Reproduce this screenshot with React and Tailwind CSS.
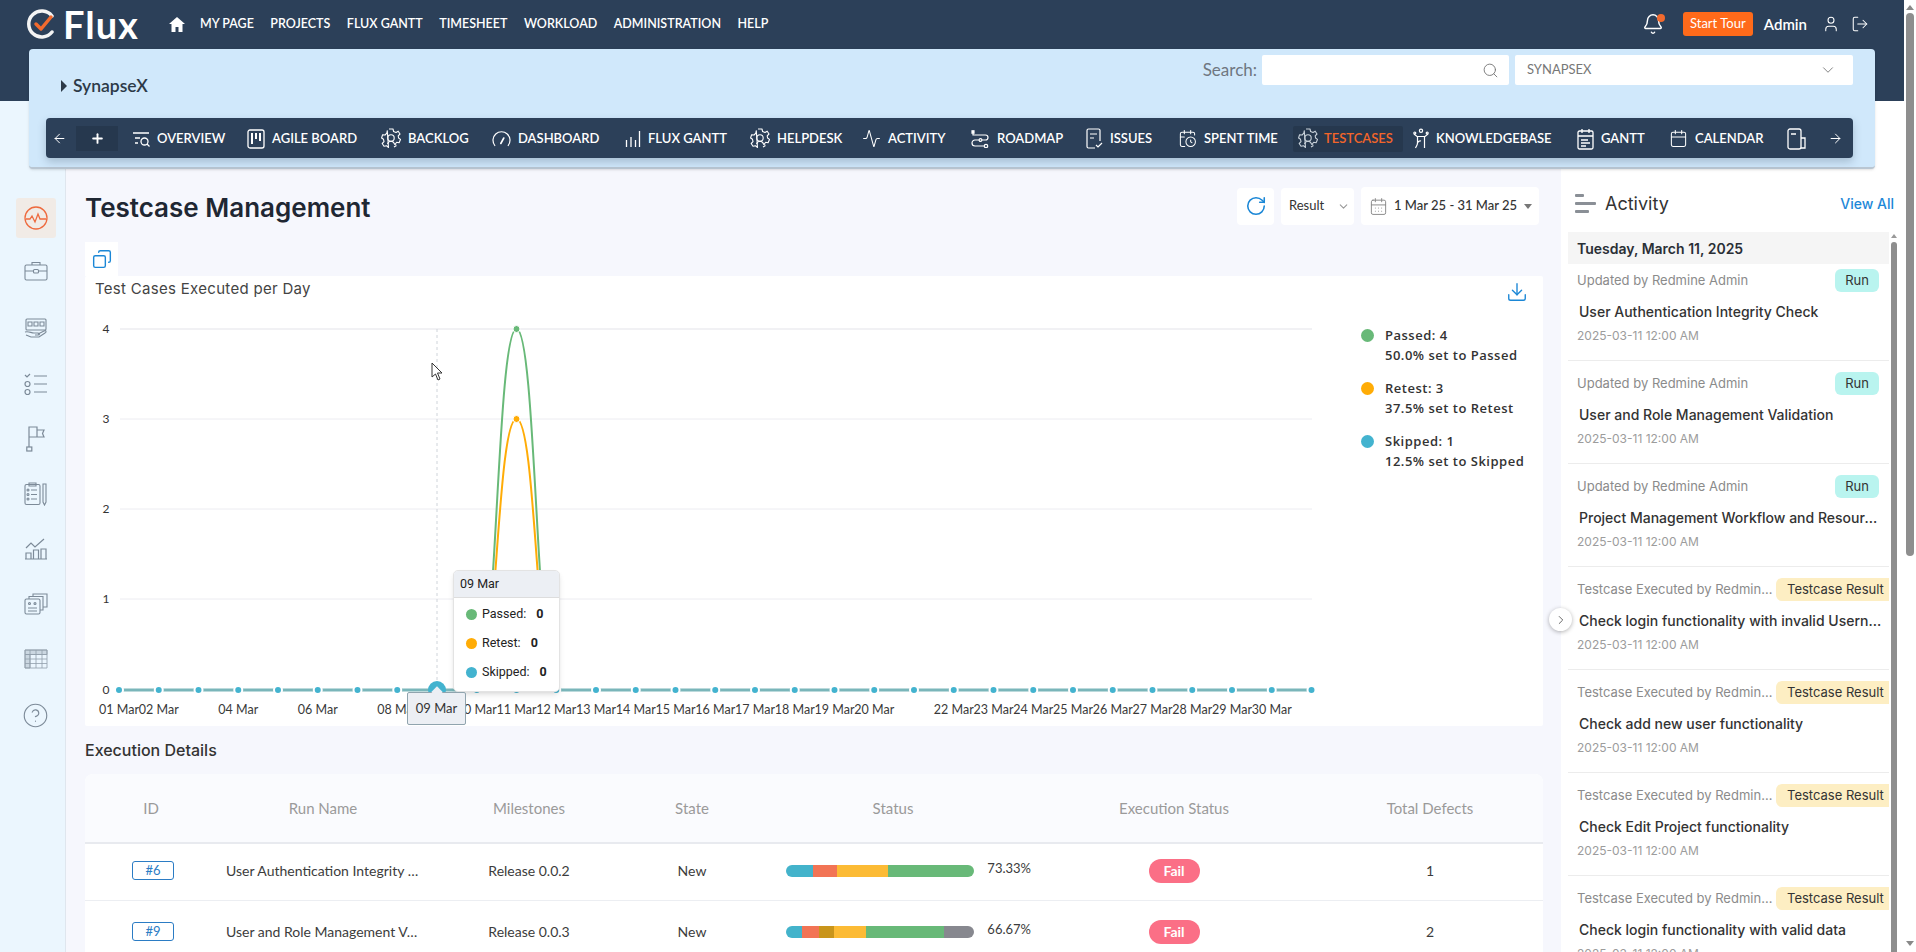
import React from 'react';
import {
  Bell, User, LogOut, Search, ChevronDown, RotateCw, Copy, Download, ArrowLeft, ArrowRight, Plus,
  ChevronRight, CircleHelp, Activity, CalendarClock, Calendar, CalendarDays,
} from 'lucide-react';

const topNav = ['MY PAGE', 'PROJECTS', 'FLUX GANTT', 'TIMESHEET', 'WORKLOAD', 'ADMINISTRATION', 'HELP'];

const OverviewIcon = () => (
  <svg width="18" height="18" viewBox="0 0 18 18" fill="none" stroke="currentColor" strokeWidth="1.3">
    <path d="M1 3h16M3 8h5M3 13h3" />
    <circle cx="12.5" cy="11.5" r="3.5" />
    <path d="M15 14l2.5 2.5" />
  </svg>
);

const AgileIcon = () => (
  <svg width="18" height="20" viewBox="0 0 18 20" fill="none" stroke="currentColor" strokeWidth="1.3">
    <rect x="1" y="1" width="16" height="18" rx="2" />
    <path d="M5 4v11M9 4v6M13 4v8" strokeWidth="2" />
  </svg>
);

// gear outline with a small figure in the middle, used for backlog, helpdesk and testcases
const GearIcon = () => (
  <svg width="20" height="22" viewBox="0 0 20 22" fill="none" stroke="currentColor" strokeWidth="1.1" strokeLinejoin="round">
    <path d="M8 1h4l.6 2.500 2.400 1 2.200-1.300 1.800 2.800-1.800 1.800.4 2.200 1.900 1.400-1.400 3.300-2.400-.4-1.500 1.700M7.500 19.500l-2-1.800-2.500.6-1.800-2.800 1.800-1.800-.5-2.400L.6 10l1-3.300 2.500.3 1.700-1.800L6.300 2.700z" />
    <circle cx="10" cy="10" r="3.200" />
    <path d="M6.500 16c.8-2 2-2.800 3.500-2.800s3 1 3.600 3l1.800 1.200M13 19l2.500-1.500" />
  </svg>
);

const DashIcon = () => (
  <svg width="19" height="19" viewBox="0 0 19 19" fill="none" stroke="currentColor" strokeWidth="1.2" strokeLinecap="round">
    <path d="M2.800 16.500A8.500 8.500 0 1 1 16.200 16.500" />
    <path d="M8.800 14.500l3-5.500" strokeWidth="1.600" />
  </svg>
);

const GanttIcon = () => (
  <svg width="16" height="18" viewBox="0 0 16 18" fill="none" stroke="currentColor" strokeWidth="1.3">
    <path d="M1.5 10v7M6 7v10M10.500 10v7M14.500 1v16" />
  </svg>
);

const ActivityIcon = () => <Activity size={19} strokeWidth={1.3} />;

const RoadmapIcon = () => (
  <svg width="19" height="18" viewBox="0 0 19 18" fill="none" stroke="currentColor" strokeWidth="1.200">
    <rect x="1" y="0.800" width="2" height="2.400" fill="currentColor" />
    <path d="M2 3.500V5h12.500a2.500 2.500 0 0 1 0 5H4a3 3 0 0 0 0 6h9" />
    <circle cx="9.500" cy="10" r="1.400" fill="#2c4059" />
    <circle cx="15" cy="16" r="1.700" />
  </svg>
);

const IssuesIcon = () => (
  <svg width="17" height="21" viewBox="0 0 17 21" fill="none" stroke="currentColor" strokeWidth="1.2">
    <path d="M9 20H2.500A1.500 1.500 0 0 1 1 18.500v-16A1.500 1.500 0 0 1 2.500 1h10A1.500 1.500 0 0 1 14 2.500V13" />
    <path d="M4 6h7M4 10h4M10 17l2 2 4-4" />
  </svg>
);

const BookIcon = () => (
  <svg width="16" height="22" viewBox="0 0 16 22" fill="none" stroke="currentColor" strokeWidth="1.2">
    <circle cx="8" cy="2.800" r="1.600" />
    <path d="M1 6l3 2.500h8L15 6" />
    <circle cx="1.800" cy="5" r="1" />
    <circle cx="14.200" cy="5" r="1" />
    <path d="M4.500 9v6c0 2-1 3-2 5M11.500 9v11M8 13a3 3 0 0 0-3.500 2" />
  </svg>
);

const GanttDocIcon = () => (
  <svg width="17" height="22" viewBox="0 0 17 22" fill="none" stroke="currentColor" strokeWidth="1.3">
    <rect x="1" y="3" width="15" height="18" rx="1.500" />
    <path d="M5 1v4M12 1v4M1 8h15M4 12h7M4 15h9M4 18h5" />
  </svg>
);

const NotesIcon = () => (
  <svg width="20" height="22" viewBox="0 0 20 22" fill="none" stroke="currentColor" strokeWidth="1.3">
    <rect x="1" y="1" width="13" height="20" rx="2" />
    <path d="M4 6h5M14 10h4v10h-4" />
  </svg>
);

const toolbar = [
  { label: 'OVERVIEW', icon: <OverviewIcon />, width: 'w-[115px]' },
  { label: 'AGILE BOARD', icon: <AgileIcon />, width: 'w-[134px]' },
  { label: 'BACKLOG', icon: <GearIcon />, width: 'w-[111px]' },
  { label: 'DASHBOARD', icon: <DashIcon />, width: 'w-[133px]' },
  { label: 'FLUX GANTT', icon: <GanttIcon />, width: 'w-[125px]' },
  { label: 'HELPDESK', icon: <GearIcon />, width: 'w-[112px]' },
  { label: 'ACTIVITY', icon: <ActivityIcon />, width: 'w-[109px]' },
  { label: 'ROADMAP', icon: <RoadmapIcon />, width: 'w-[115px]' },
  { label: 'ISSUES', icon: <IssuesIcon />, width: 'w-[92px]' },
  { label: 'SPENT TIME', icon: <CalendarClock size={19} strokeWidth={1.3} />, width: 'w-[120px]' },
  { label: 'TESTCASES', icon: <GearIcon />, width: 'w-[115px]', active: true },
  { label: 'KNOWLEDGEBASE', icon: <BookIcon />, width: 'w-[164px]' },
  { label: 'GANTT', icon: <GanttDocIcon />, width: 'w-[92px]' },
  { label: 'CALENDAR', icon: <Calendar size={19} strokeWidth={1.3} />, width: 'w-[118px]' },
];

const BriefcaseIcon = () => (
  <svg width="24" height="20" viewBox="0 0 24 20" fill="none" stroke="currentColor" strokeWidth="1.1">
    <rect x="1" y="4" width="22" height="15" rx="1.500" />
    <path d="M8 4V1.500h8V4M1 10h8M15 10h8" />
    <rect x="9.500" y="8.500" width="5" height="3.500" rx="1" />
  </svg>
);

const MonitorsIcon = () => (
  <svg width="24" height="24" viewBox="0 0 24 24" fill="none" stroke="currentColor" strokeWidth="1.1">
    <rect x="2" y="2" width="20" height="11" rx="1" />
    <path d="M4 5h4v4H4zM10 5h4v4h-4zM16 5h4v4h-4zM1 15c4-1 6 1 9 1h4c2 0 2 2 0 2h-3M14 17l6-3c2-1 3 1 1 2l-6 4H7l-5-2" />
  </svg>
);

const ChecklistIcon = () => (
  <svg width="24" height="24" viewBox="0 0 24 24" fill="none" stroke="currentColor" strokeWidth="1.2">
    <path d="M1 3l2 2 3-3M10 4h13M10 12h13M10 20h13" />
    <circle cx="3.500" cy="12" r="2.500" />
    <circle cx="3.500" cy="20" r="2.500" />
  </svg>
);

const FlagIcon = () => (
  <svg width="20" height="26" viewBox="0 0 20 26" fill="none" stroke="currentColor" strokeWidth="1.2">
    <path d="M3 21V1h8v10H3M11 4h7l-1.500 3.500L18 11h-7" />
    <rect x="0.800" y="21" width="5" height="4" />
  </svg>
);

const ClipboardPenIcon = () => (
  <svg width="24" height="24" viewBox="0 0 24 24" fill="none" stroke="currentColor" strokeWidth="1.1">
    <rect x="1" y="2.500" width="15" height="20" rx="1.500" />
    <path d="M5 1h7v3H5zM7 8h6M7 12.500h6M7 17h6" />
    <circle cx="4" cy="8" r="1" />
    <circle cx="4" cy="12.500" r="1" />
    <circle cx="4" cy="17" r="1" />
    <path d="M19 2h3v18l-1.500 3-1.500-3z" />
  </svg>
);

const ChartIcon = () => (
  <svg width="24" height="24" viewBox="0 0 24 24" fill="none" stroke="currentColor" strokeWidth="1.2">
    <path d="M1 22h22M2 22v-6h5v6M9.500 22v-9h5v9M17 22V12h5v10M2 11l5-5 4 4 9-8" />
  </svg>
);

const CardsIcon = () => (
  <svg width="24" height="24" viewBox="0 0 24 24" fill="none" stroke="currentColor" strokeWidth="1.1">
    <rect x="1" y="7" width="15" height="15" rx="1.500" />
    <path d="M5 7V4.500h14V18h-3M9 4.500V2h14v13h-4" />
    <path d="M4 16h9M4 19h9" />
    <circle cx="5.500" cy="11.500" r="1" />
    <circle cx="11" cy="11.500" r="1" />
  </svg>
);

const GridIcon = () => (
  <svg width="24" height="20" viewBox="0 0 24 20" fill="none" stroke="currentColor" strokeWidth="0.8" opacity="0.8">
    <path d="M1 1h22v18H1zM1 5.500h22M1 10h22M1 14.500h22M6 1v18M12 1v18M18 1v18" />
    <path d="M1 1h22v4.500H1zM1 5.500h5V19H1z" fill="currentColor" fillOpacity="0.35" />
  </svg>
);

const sideIcons = [
  <BriefcaseIcon />,
  <MonitorsIcon />,
  <ChecklistIcon />,
  <FlagIcon />,
  <ClipboardPenIcon />,
  <ChartIcon />,
  <CardsIcon />,
  <GridIcon />,
];

const activity = [
  { meta: 'Updated by Redmine Admin', tag: 'Run', title: 'User Authentication Integrity Check' },
  { meta: 'Updated by Redmine Admin', tag: 'Run', title: 'User and Role Management Validation' },
  { meta: 'Updated by Redmine Admin', tag: 'Run', title: 'Project Management Workflow and Resource Planning' },
  { meta: 'Testcase Executed by Redmine Admin', tag: 'Testcase Result', title: 'Check login functionality with invalid Username' },
  { meta: 'Testcase Executed by Redmine Admin', tag: 'Testcase Result', title: 'Check add new user functionality' },
  { meta: 'Testcase Executed by Redmine Admin', tag: 'Testcase Result', title: 'Check Edit Project functionality' },
  { meta: 'Testcase Executed by Redmine Admin', tag: 'Testcase Result', title: 'Check login functionality with valid data' },
];

const xStart = 119;
const xStep = 39.75;
const days = Array.from({ length: 31 }, (_, i) => i);
const hiddenLabels = [2, 4, 6, 8, 20, 30];

function Chart() {
  return (
    <svg width="1265" height="429" viewBox="85 297 1265 429" className="block shrink-0">
      {[329, 419, 509, 599].map((y) => (
        <line key={y} x1="120" x2="1312" y1={y} y2={y} stroke="#ececf1" strokeWidth={y === 329 ? 1.5 : 1} />
      ))}
      {[['4', 329], ['3', 419], ['2', 509], ['1', 599], ['0', 690]].map(([t, y]) => (
        <text key={t} x="106" y={y + 4} textAnchor="middle" fontSize="12" fontFamily="Lato, sans-serif" fill="#333">{t}</text>
      ))}
      <line x1="437" x2="437" y1="329" y2="690" stroke="#cfd4da" strokeDasharray="3 3" />
      <path d="M476.750 690C496.600 690 496.600 329 516.500 329C536.400 329 536.400 690 556.250 690" fill="none" stroke="#68b978" strokeWidth="2" />
      <path d="M476.750 690C496.600 690 496.600 419 516.500 419C536.400 419 536.400 690 556.250 690" fill="none" stroke="#ffac06" strokeWidth="2" />
      <line x1="119" x2="1312" y1="690" y2="690" stroke="#7ab6ba" strokeWidth="3" />
      {days.map((i) => (
        <circle key={i} cx={xStart + i * xStep} cy="690" r="4" fill="#43b3cf" stroke="#fff" strokeWidth="2" />
      ))}
      <circle cx="516.500" cy="329" r="3.500" fill="#68b978" stroke="#fff" strokeWidth="1" />
      <circle cx="516.500" cy="419" r="3.500" fill="#ffac06" stroke="#fff" strokeWidth="1" />
      <circle cx="437" cy="690" r="9" fill="#43b3cf" />
      {days.filter((i) => !hiddenLabels.includes(i)).map((i) => (
        <text key={i} x={xStart + i * xStep} y="714" textAnchor="middle" fontSize="12.500" fontFamily="Lato, sans-serif" fill="#3a3a3a">
          {String(i + 1).padStart(2, '0')} Mar
        </text>
      ))}
    </svg>
  );
}

function Legend() {
  const rows = [
    { color: 'bg-[#68b978]', a: 'Passed: 4', b: '50.0% set to Passed' },
    { color: 'bg-[#ffac06]', a: 'Retest: 3', b: '37.5% set to Retest' },
    { color: 'bg-[#43b3cf]', a: 'Skipped: 1', b: '12.5% set to Skipped' },
  ];
  return (
    <div className="ml-[11px] mt-[28px] flex flex-col gap-[13px] font-['Open_Sans',sans-serif] text-[13px] font-semibold leading-[20px] tracking-[0.5px] text-[#333]">
      {rows.map((r) => (
        <div key={r.a} className="flex gap-[11px]">
          <span className="mt-[4px] flex h-[13px] w-[13px] shrink-0">
            <span className={`h-[13px] w-[13px] rounded-full ${r.color}`} />
          </span>
          <div className="whitespace-nowrap">
            <div>{r.a}</div>
            <div>{r.b}</div>
          </div>
        </div>
      ))}
    </div>
  );
}

function ChartTooltip() {
  const rows = [
    { color: 'bg-[#68b978]', label: 'Passed:' },
    { color: 'bg-[#ffac06]', label: 'Retest:' },
    { color: 'bg-[#43b3cf]', label: 'Skipped:' },
  ];
  return (
    <div className="absolute left-[368px] top-[294px] h-[122px] w-[107px] overflow-hidden rounded-[5px] border border-[#e3e3e3] bg-white font-['Roboto',sans-serif] text-[12.5px] text-[#222] shadow-md">
      <div className="flex h-[27px] items-center border-b border-[#ddd] bg-[#eceff4] pl-[6px]">09 Mar</div>
      <div className="flex flex-col pt-[2px]">
        {rows.map((r) => (
          <div key={r.label} className="flex h-[29px] items-center pl-[12px]">
            <span className={`mr-[5px] h-[11px] w-[11px] rounded-full ${r.color}`} />
            <span>{r.label}</span>
            <span className="ml-[10px] font-bold">0</span>
          </div>
        ))}
      </div>
    </div>
  );
}

const tableCols = 'grid grid-cols-[132px_212px_200px_126px_276px_286px_226px]';

const runs = [
  {
    id: '#6', name: 'User Authentication Integrity Check', milestone: 'Release 0.0.2', pct: '73.33%', defects: '1', height: 'h-[57px] pb-[3px] border-b border-[#eceef2]',
    bar: [['w-[27px]', 'bg-[#43b3cb]'], ['w-[24px]', 'bg-[#f27455]'], ['w-[51px]', 'bg-[#fcbb35]'], ['w-[87px]', 'bg-[#68b978]']],
  },
  {
    id: '#9', name: 'User and Role Management Validation', milestone: 'Release 0.0.3', pct: '66.67%', defects: '2', height: 'h-[61px]',
    bar: [['w-[16px]', 'bg-[#43b3cb]'], ['w-[17px]', 'bg-[#f27455]'], ['w-[15px]', 'bg-[#c9951b]'], ['w-[32px]', 'bg-[#fcbb35]'], ['w-[79px]', 'bg-[#68b978]'], ['w-[30px]', 'bg-[#87888f]']],
  },
];

function RunsTable() {
  return (
    <div className="mt-[15px] overflow-hidden rounded-t-[8px] bg-white text-[14px]">
      <div className={`${tableCols} h-[70px] items-center border-b-2 border-[#e8eaef] bg-[#fafbfe] text-center text-[15px] text-[#9a9a9a]`}>
        <div>ID</div>
        <div>Run Name</div>
        <div>Milestones</div>
        <div>State</div>
        <div>Status</div>
        <div>Execution Status</div>
        <div>Total Defects</div>
      </div>
      {runs.map((r) => (
        <div key={r.id} className={`${tableCols} ${r.height} items-center text-center text-[#3c3c3c]`}>
          <div className="flex justify-center pl-[4px]">
            <span className="flex h-[19px] w-[42px] items-center justify-center rounded-[3px] border border-[#2b7cc4] text-[13px] text-[#2b7cc4]">{r.id}</span>
          </div>
          <div className="truncate pl-[9px] pr-[8px] text-left">{r.name}</div>
          <div>{r.milestone}</div>
          <div>New</div>
          <div className="flex items-center pl-[31px]">
            <div className="flex h-[12px] w-[189px] overflow-hidden rounded-full">
              {r.bar.map(([w, c], i) => <span key={i} className={`${w} ${c}`} />)}
            </div>
            <span className="ml-[13px] -mt-[3px] text-[13px]">{r.pct}</span>
          </div>
          <div className="flex justify-center">
            <span className="flex h-[24px] w-[51px] items-center justify-center rounded-[12px] bg-[#fb6f86] font-bold text-white">Fail</span>
          </div>
          <div>{r.defects}</div>
        </div>
      ))}
    </div>
  );
}

function ActivityItem({ item }) {
  const isRun = item.tag === 'Run';
  return (
    <div className="h-[103px] shrink-0 overflow-hidden border-b border-[#ececec] pl-[9px] pt-[11px]">
      <div className="flex h-[23px] items-center gap-[3px]">
        <span className="min-w-0 flex-1 truncate text-[13px] text-[#8b8b8b]">{item.meta}</span>
        {isRun ? (
          <span className="mr-[10px] flex h-[23px] w-[44px] shrink-0 items-center justify-center rounded-[6px] bg-[#b9f4ef] text-[13px] text-[#333]">{item.tag}</span>
        ) : (
          <span className="flex h-[23px] w-[113px] shrink-0 items-center rounded-l-[6px] bg-[#fdeec3] pl-[11px] text-[13px] text-[#333]">{item.tag}</span>
        )}
      </div>
      <div className="ml-[2px] mr-[4px] mt-[10px] truncate text-[14px] font-medium leading-[20px] text-[#333]">{item.title}</div>
      <div className="mt-[6px] text-[12px] leading-[16px] text-[#9c9c9c]">2025-03-11 12:00 AM</div>
    </div>
  );
}

export default function App() {
  return (
    <div className="flex h-screen overflow-hidden bg-white font-['Lato',sans-serif]">
      <div className="flex min-w-0 flex-1 flex-col">
        {/* top bar */}
        <header className="flex h-[101px] shrink-0 items-start bg-[#2c4059] pl-[27px] pr-[35px] text-white">
          <div className="flex h-[48px] items-center">
            <svg width="30" height="30" viewBox="0 0 30 30" fill="none" className="shrink-0">
              <path d="M25 7A13 13 0 1 0 25 23" stroke="#f4f4f4" strokeWidth="3.500" strokeLinecap="round" />
              <path d="M9 15l5 5 10-12" stroke="#f26a2e" strokeWidth="3.500" strokeLinecap="round" strokeLinejoin="round" />
            </svg>
            <span className="ml-[6px] text-[38px] font-bold leading-none tracking-[1px]">Flux</span>
          </div>
          <nav className="ml-[30px] flex h-[48px] items-center gap-[15px] text-[12.5px] font-semibold">
            <svg width="16" height="15" viewBox="0 0 16 15" fill="currentColor">
              <path d="M8 0L0 7h2.500v8h4v-5h3v5h4V7H16z" />
            </svg>
            <div className="flex gap-[16.500px]">
              {topNav.map((n) => <a key={n}>{n}</a>)}
            </div>
          </nav>
          <div className="ml-auto flex h-[48px] items-center">
            <div className="relative">
              <Bell size={22} strokeWidth={1.6} />
              <span className="absolute -right-[1px] top-[1px] h-[8px] w-[8px] rounded-full bg-[#f26a2e]" />
            </div>
            <button className="ml-[19px] flex h-[24px] w-[70px] items-center justify-center rounded-[3px] bg-[#ff6a1a] text-[13px]">Start Tour</button>
            <span className="ml-[11px] text-[15px] font-semibold">Admin</span>
            <User size={18} strokeWidth={1.4} className="ml-[15px]" />
            <LogOut size={18} strokeWidth={1.4} className="ml-[11px]" />
          </div>
        </header>

        {/* project panel */}
        <section className="relative z-10 mx-[29px] -mt-[52px] h-[120px] shrink-0 rounded-[4px] border-b-2 border-[#b9c6d2] bg-[#d0e8fb] pl-[17px] pr-[22px] shadow-sm">
          <div className="flex h-[69px]">
            <div className="mt-[28px] flex h-[18px] items-center text-[17.5px] font-semibold text-[#2d3a48]">
              <span className="ml-[15px] h-0 w-0 border-y-[6px] border-l-[6px] border-y-transparent border-l-[#2d3a48]" />
              <span className="ml-[6px]">SynapseX</span>
            </div>
            <div className="ml-auto mt-[6px] flex h-[30px] items-center">
              <span className="mr-[5px] text-[17px] text-[#6f7680]">Search:</span>
              <div className="flex h-[30px] w-[247px] items-center justify-end rounded-[2px] bg-white pr-[10px] text-[#777]">
                <Search size={17} strokeWidth={1.3} />
              </div>
              <div className="ml-[6px] flex h-[30px] w-[338px] items-center justify-between rounded-[2px] bg-white pl-[12px] pr-[16px] text-[13px] text-[#777]">
                <span>SYNAPSEX</span>
                <ChevronDown size={18} strokeWidth={1.2} />
              </div>
            </div>
          </div>
          <div className="flex h-[40px] items-center rounded-[4px] bg-[#2c4059] text-[13px] font-semibold text-white shadow-[0_4px_8px_rgba(44,64,89,0.25)]">
            <ArrowLeft size={15} strokeWidth={1.6} className="ml-[6px] shrink-0" />
            <div className="ml-[9px] flex h-[25px] w-[42px] shrink-0 items-center justify-center bg-[#26384e]">
              <Plus size={15} strokeWidth={3} />
            </div>
            <div className="ml-[14px] flex min-w-0 flex-1 items-center pt-[1px]">
              {toolbar.map((t) => (
                <div key={t.label} className={`flex shrink-0 items-center gap-[7px] ${t.width} ${t.active ? 'text-[#f2652a]' : ''}`}>
                  {t.active ? (
                    <div className="-ml-[5px] flex h-[26px] items-center gap-[6px] rounded-[2px] bg-[#26384e] pl-[5px] pr-[10px]">
                      <span className="text-[#c9d2da]">{t.icon}</span>
                      <span>{t.label}</span>
                    </div>
                  ) : (
                    <>
                      {t.icon}
                      <span>{t.label}</span>
                    </>
                  )}
                </div>
              ))}
              <NotesIcon />
            </div>
            <ArrowRight size={15} strokeWidth={1.6} className="mr-[10px] shrink-0" />
          </div>
        </section>

        {/* page body */}
        <div className="-mt-[68px] flex min-h-0 flex-1">
          <aside className="flex w-[66px] shrink-0 flex-col items-center border-r border-[#dfe6ee] bg-[#ebf6fe] pl-[6px] pt-[97px] text-[#7c8a98]">
            <div className="flex h-[40px] w-[40px] items-center justify-center rounded-[3px] bg-[#f1ebe6] text-[#ee6a3e]">
              <svg width="24" height="24" viewBox="0 0 24 24" fill="none" stroke="currentColor" strokeWidth="1.300">
                <circle cx="12" cy="12" r="11" />
                <path d="M2 13h4l2-3 3 6 3-8 2 5h6" />
              </svg>
            </div>
            <div className="mt-[5.5px] flex flex-col items-center">
              {sideIcons.map((icon, i) => (
                <div key={i} className="flex h-[55px] items-center justify-center first:mb-[3px]">{icon}</div>
              ))}
            </div>
            <CircleHelp size={27} strokeWidth={1} className="mt-[15px] shrink-0" />
          </aside>

          <main className="min-w-0 flex-1 overflow-hidden bg-[#f6f7fd] pb-4 pl-[19px] pr-[18px] pt-[86px]">
            <div className="flex h-[38px] items-center justify-between pr-[4px]">
              <h1 className="mt-[2px] font-['Inter',sans-serif] text-[26px] font-semibold text-[#1f2733]">Testcase Management</h1>
              <div className="flex items-center gap-[7px]">
                <div className="flex h-[37px] w-[37px] items-center justify-center rounded-[4px] bg-white text-[#1b87d6]">
                  <RotateCw size={22} strokeWidth={1.7} />
                </div>
                <div className="flex h-[37px] w-[73px] items-center justify-between rounded-[4px] bg-white pl-[8px] pr-[4px] text-[13px] text-[#333]">
                  Result
                  <ChevronDown size={13} className="text-[#999]" />
                </div>
                <div className="flex h-[38px] w-[178px] items-center rounded-[4px] bg-white pl-[8px] text-[13px] font-medium text-[#333]">
                  <CalendarDays size={19} strokeWidth={1.2} className="text-[#888]" />
                  <span className="ml-[6px]">1 Mar 25 - 31 Mar 25</span>
                  <span className="ml-[7px] h-0 w-0 border-x-[4px] border-t-[5px] border-x-transparent border-t-[#777]" />
                </div>
              </div>
            </div>

            <div className="mt-[17px] flex h-[34px] w-[33px] items-center justify-center bg-white text-[#1b87d6]">
              <Copy size={20} strokeWidth={1.7} className="-scale-x-100" />
            </div>

            <div className="relative h-[450px] rounded-[2px] bg-white">
              <div className="flex h-[21px] items-start justify-between pl-[10px] pr-[15px] font-['Inter',sans-serif] text-[15px] leading-[14px] tracking-[0.3px] text-[#444]">
                <span className="mt-[6px]">Test Cases Executed per Day</span>
                <Download size={22} strokeWidth={1.5} className="mt-[5px] text-[#1b87d6]" />
              </div>
              <div className="flex">
                <Chart />
                <Legend />
              </div>
              <ChartTooltip />
              <div className="absolute left-[322px] top-[416px] flex h-[33px] w-[59px] items-center justify-center rounded-[2px] border border-[#90a4ae] bg-[#eceff4] text-[13px] text-[#333]">
                09 Mar
                <span className="absolute -top-[5px] left-[25px] h-[8px] w-[8px] rotate-45 bg-[#eceff4]" />
              </div>
              <svg width="13" height="20" viewBox="0 0 13 20" fill="#fff" stroke="#333" strokeWidth="1" className="absolute left-[346px] top-[86px]">
                <path d="M1 1v14l3.500-3 2.500 6 2-1-2.500-6H11z" />
              </svg>
            </div>

            <h2 className="mt-[15px] h-[18px] font-['Inter',sans-serif] text-[16px] font-medium leading-[18px] text-[#333]">Execution Details</h2>
            <RunsTable />
          </main>

          <aside className="relative flex w-[343px] shrink-0 flex-col overflow-visible bg-white pt-[87px] font-['Inter',sans-serif]">
            <div className="absolute -left-[12px] top-[507px] z-10 flex h-[23px] w-[23px] items-center justify-center rounded-full bg-white text-[#555] shadow-[0_1px_4px_rgba(0,0,0,0.3)]">
              <ChevronRight size={14} strokeWidth={1.5} />
            </div>
            <div className="flex h-[30px] items-center pl-[14px] pr-[10px]">
              <svg width="21" height="19" viewBox="0 0 21 19" fill="#8a8f96">
                <rect width="9" height="3" rx="1" />
                <rect y="8" width="21" height="3" rx="1" />
                <rect y="16" width="14" height="3" rx="1" />
              </svg>
              <span className="ml-[9px] text-[18px] text-[#333]">Activity</span>
              <span className="ml-auto text-[14px] font-medium text-[#1e88d8]">View All</span>
            </div>
            <div className="mt-[14px] flex min-h-0 flex-1 pl-[7px]">
              <div className="flex w-[321px] shrink-0 flex-col overflow-hidden">
                <div className="relative z-10 -mb-[6px] flex h-[32px] shrink-0 items-center bg-[#f5f5f5] pl-[9px] text-[14px] font-semibold text-[#2a2f36]">Tuesday, March 11, 2025</div>
                {activity.map((item) => <ActivityItem key={item.title} item={item} />)}
              </div>
              <div className="ml-[1px] flex w-[7px] shrink-0 flex-col items-center">
                <span className="mt-[2px] h-0 w-0 border-x-[3px] border-b-[4px] border-x-transparent border-b-[#999]" />
                <span className="mt-[4px] w-[6px] flex-1 rounded-t-[3px] bg-[#8e8e8e]" />
              </div>
            </div>
          </aside>
        </div>
      </div>

      {/* page scrollbar */}
      <div className="flex w-[12px] shrink-0 flex-col items-center bg-white">
        <span className="mt-[5px] h-0 w-0 border-x-[4px] border-b-[5px] border-x-transparent border-b-[#888]" />
        <span className="mt-[3px] h-[543px] w-[8px] rounded-[4px] bg-[#8e8e8e]" />
        <span className="mb-[6px] mt-auto h-0 w-0 border-x-[4px] border-t-[5px] border-x-transparent border-t-[#888]" />
      </div>
    </div>
  );
}
